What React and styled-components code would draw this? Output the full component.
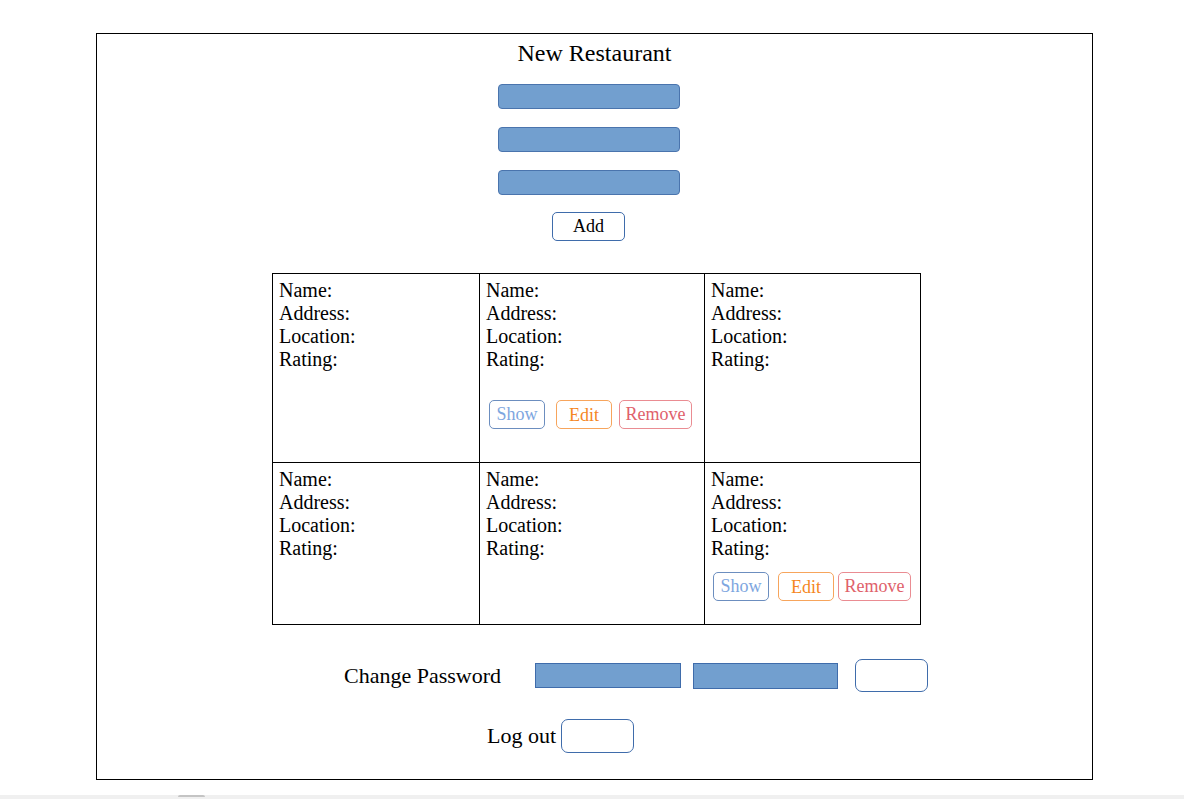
import React from 'react'
import styled, { createGlobalStyle } from 'styled-components'

const GlobalStyle = createGlobalStyle`
html, body {
  margin: 0;
  padding: 0;
  background: #ffffff;
  overflow: hidden;
}
body {
  font-family: "Liberation Serif", "Times New Roman", serif;
  color: #000000;
}
*, *::before, *::after {
  box-sizing: border-box;
}
`

const cells = [
    { id: 1 },
    { id: 2, actions: { top: 29, offsets: [3, 11, 7] } },
    { id: 3 },
    { id: 4 },
    { id: 5 },
    { id: 6, actions: { top: 12, offsets: [2, 9, 4] } },
]

const labels = ['Name:', 'Address:', 'Location:', 'Rating:']

const buttonKinds = [
    { label: 'Show', kind: 'show', width: 56 },
    { label: 'Edit', kind: 'edit', width: 56 },
    { label: 'Remove', kind: 'remove', width: 73 },
]

const tones = {
    show: { text: '#7ea6e0', border: '#6c8ebf' },
    edit: { text: '#f5871f', border: '#f7a55c' },
    remove: { text: '#e0616b', border: '#ea8c92' },
}

const App = () => {
    return (
        <Page>
            <GlobalStyle />
            <Frame>
                <Title>New Restaurant</Title>
                <Form>
                    <FieldInput />
                    <FieldInput />
                    <FieldInput />
                    <OutlineButton width={73} height={29} top={17} size={18}>Add</OutlineButton>
                </Form>

                <Grid>
                    {cells.map(cell => (
                        <Cell key={cell.id}>
                            {labels.map(l => <Line key={l}>{l}</Line>)}
                            {cell.actions && (
                                <ActionRow top={cell.actions.top}>
                                    {buttonKinds.map((b, i) => (
                                        <ActionButton
                                            key={b.kind}
                                            tone={b.kind}
                                            width={b.width}
                                            left={cell.actions.offsets[i]}
                                        >
                                            {b.label}
                                        </ActionButton>
                                    ))}
                                </ActionRow>
                            )}
                        </Cell>
                    ))}
                </Grid>

                <PasswordRow>
                    <RowLabel>Change Password</RowLabel>
                    <FlatInput width={146} height={25} left={34} />
                    <FlatInput width={145} height={26} left={12} />
                    <OutlineButton width={73} height={33} left={17} radius={7} />
                </PasswordRow>

                <LogoutRow>
                    <RowLabel>Log out</RowLabel>
                    <OutlineButton width={73} height={34} left={5} radius={7} />
                </LogoutRow>
            </Frame>
            <ScrollStrip>
                <Thumb />
            </ScrollStrip>
        </Page>
    )
}

const Page = styled.div`
width: 100%;
height: 799px;
padding-top: 33px;
`

const Frame = styled.div`
width: 997px;
height: 747px;
margin-left: 96px;
border: 1px solid #000000;
padding-top: 5px;
display: flex;
flex-direction: column;
align-items: center;
`

const Title = styled.div`
font-size: 24px;
line-height: 28px;
`

const Form = styled.div`
display: flex;
flex-direction: column;
align-items: center;
gap: 18px;
margin-top: 17px;
margin-right: 12px;
`

const FieldInput = styled.div`
width: 182px;
height: 25px;
background: #729fcf;
border: 1px solid #4a74ad;
border-radius: 4px;
`

const OutlineButton = styled.div`
width: ${p => p.width}px;
height: ${p => p.height}px;
margin-top: ${p => (p.top ? p.top - 18 : 0)}px;
margin-left: ${p => p.left || 0}px;
border: 1px solid #3f6cab;
border-radius: ${p => p.radius || 5}px;
background: #ffffff;
display: flex;
align-items: center;
justify-content: center;
font-size: ${p => p.size || 18}px;
flex-shrink: 0;
`

const Grid = styled.div`
display: grid;
grid-template-columns: 207px 225px 216px;
grid-template-rows: 189px 162px;
border-top: 1px solid #000000;
border-left: 1px solid #000000;
margin-top: 32px;
margin-left: 4px;
`

const Cell = styled.div`
border-right: 1px solid #000000;
border-bottom: 1px solid #000000;
padding: 5px 6px 0;
`

const Line = styled.div`
font-size: 20px;
line-height: 23px;
`

const ActionRow = styled.div`
display: flex;
margin-top: ${p => p.top}px;
`

const ActionButton = styled.div`
width: ${p => p.width}px;
height: 29px;
margin-left: ${p => p.left}px;
border: 1px solid ${p => tones[p.tone].border};
border-radius: 5px;
color: ${p => tones[p.tone].text};
font-size: 18px;
display: flex;
align-items: center;
justify-content: center;
padding-top: ${p => (p.tone === 'edit' ? 2 : 0)}px;
flex-shrink: 0;
`

const PasswordRow = styled.div`
align-self: flex-start;
display: flex;
align-items: center;
margin-top: 34px;
margin-left: 247px;
height: 33px;
`

const LogoutRow = styled.div`
align-self: flex-start;
display: flex;
align-items: center;
margin-top: 27px;
margin-left: 390px;
height: 34px;
`

const RowLabel = styled.div`
font-size: 22px;
line-height: 1;
white-space: nowrap;
`

const FlatInput = styled.div`
width: ${p => p.width}px;
height: ${p => p.height}px;
margin-left: ${p => p.left}px;
background: #729fcf;
border: 1px solid #3f6cab;
flex-shrink: 0;
`

const ScrollStrip = styled.div`
margin-top: 15px;
width: 100%;
height: 4px;
background: #f0f0f0;
`

const Thumb = styled.div`
width: 27px;
height: 2px;
margin: 2px 0 0 178px;
background: #c4c4c4;
border-radius: 3px 3px 0 0;
`

export default App
